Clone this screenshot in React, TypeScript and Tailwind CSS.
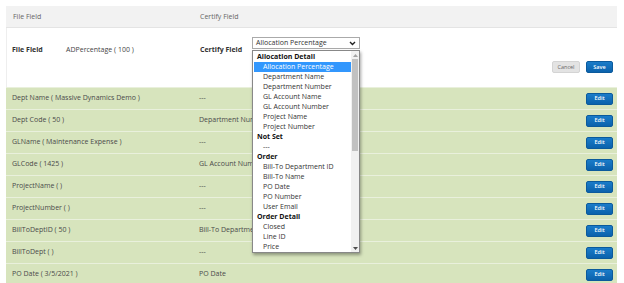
import { ReactNode } from 'react'

const rows = [
  { file: 'Dept Name ( Massive Dynamics Demo )', certify: '---' },
  { file: 'Dept Code ( 50 )', certify: 'Department Number' },
  { file: 'GLName ( Maintenance Expense )', certify: '---' },
  { file: 'GLCode ( 1425 )', certify: 'GL Account Number' },
  { file: 'ProjectName ( )', certify: '---' },
  { file: 'ProjectNumber ( )', certify: '---' },
  { file: 'BillToDeptID ( 50 )', certify: 'Bill-To Department ID' },
  { file: 'BillToDept ( )', certify: '---' },
  { file: 'PO Date ( 3/5/2021 )', certify: 'PO Date' },
]

const options: { label: string; group?: boolean; selected?: boolean }[] = [
  { label: 'Allocation Detail', group: true },
  { label: 'Allocation Percentage', selected: true },
  { label: 'Department Name' },
  { label: 'Department Number' },
  { label: 'GL Account Name' },
  { label: 'GL Account Number' },
  { label: 'Project Name' },
  { label: 'Project Number' },
  { label: 'Not Set', group: true },
  { label: '---' },
  { label: 'Order', group: true },
  { label: 'Bill-To Department ID' },
  { label: 'Bill-To Name' },
  { label: 'PO Date' },
  { label: 'PO Number' },
  { label: 'User Email' },
  { label: 'Order Detail', group: true },
  { label: 'Closed' },
  { label: 'Line ID' },
  { label: 'Price' },
]

function BlueButton({ children }: { children: ReactNode }) {
  return (
    <button className="flex h-[12px] w-[27px] items-center justify-center rounded-[2px] border border-[#0b5a9c] bg-gradient-to-b from-[#1a7cc9] to-[#0b62ac] text-[5.5px] font-semibold text-white">
      {children}
    </button>
  )
}

function Dropdown() {
  return (
    <div className="absolute top-[37px] left-[252px] w-[108px] text-[7px] leading-[10px] text-[#333]">
      <div className="flex h-[12px] items-center justify-between border border-[#aaa] bg-white pr-[3px] pl-[3px]">
        <span>Allocation Percentage</span>
        <svg width="7" height="5" viewBox="0 0 7 5">
          <path d="M1 1 L3.5 3.5 L6 1" fill="none" stroke="#222" strokeWidth="1.4" />
        </svg>
      </div>
      <div className="mt-[1px] flex h-[203px] border border-[#888] bg-white shadow-[1px_2px_3px_rgba(0,0,0,0.35)]">
        <div className="flex-1 overflow-hidden pt-[1px] pl-[1px]">
          {options.map((o) => (
            <div
              key={o.label}
              className={
                o.group
                  ? 'h-[10px] pl-[3px] font-bold text-[#111]'
                  : o.selected
                    ? 'h-[10px] bg-[#3297fd] pl-[9px] text-white'
                    : 'h-[10px] pl-[9px]'
              }
            >
              {o.label}
            </div>
          ))}
        </div>
        <div className="flex w-[8px] flex-col bg-[#f1f1f1]">
          <div className="flex h-[8px] items-center justify-center">
            <svg width="5" height="3" viewBox="0 0 5 3">
              <path d="M0 3 L2.5 0 L5 3 Z" fill="#a3a3a3" />
            </svg>
          </div>
          <div className="mx-[1px] h-[92px] bg-[#c1c1c1]" />
          <div className="flex-1" />
          <div className="flex h-[8px] items-center justify-center">
            <svg width="5" height="3" viewBox="0 0 5 3">
              <path d="M0 0 L2.5 3 L5 0 Z" fill="#505050" />
            </svg>
          </div>
        </div>
      </div>
    </div>
  )
}

export default function App() {
  return (
    <div
      className="relative h-[283px] w-[624px] overflow-hidden bg-white pt-[6px] pr-[7px] pl-[6px] text-[7px] text-[#555]"
      style={{ fontFamily: '"Open Sans", "Noto Sans", sans-serif' }}
    >
      <div className="flex h-[22px] items-center border-b border-[#e4e4e4] bg-[#f2f2f2] pt-[1px] text-[#666]">
        <div className="w-[194px] pl-[7px]">File Field</div>
        <div>Certify Field</div>
      </div>
      <div className="flex h-[59px] flex-col border-l border-[#eee] bg-white">
        <div className="flex h-[28px] items-end pb-[1px]">
          <div className="w-[59px] pl-[5px] font-bold text-[#333]">File Field</div>
          <div className="w-[134px] text-[#444]">ADPercentage ( 100 )</div>
          <div className="font-bold text-[#333]">Certify Field</div>
        </div>
        <div className="mt-[5px] flex justify-end gap-[6px] pr-[4px]">
          <button className="flex h-[12px] w-[28px] items-center justify-center rounded-[2px] border border-[#d4d4d4] bg-[#e3e3e3] text-[5.5px] text-[#666]">
            Cancel
          </button>
          <BlueButton>Save</BlueButton>
        </div>
      </div>
      <div className="flex flex-col">
        {rows.map((r) => (
          <div
            key={r.file}
            className="flex h-[22px] items-center border-t border-[#e9f0dc] bg-[#d7e4bd] pr-[4px] text-[#4a4a4a]"
          >
            <div className="w-[193px] pl-[6px]">{r.file}</div>
            <div className="flex-1">{r.certify}</div>
            <BlueButton>Edit</BlueButton>
          </div>
        ))}
      </div>
      <Dropdown />
    </div>
  )
}
